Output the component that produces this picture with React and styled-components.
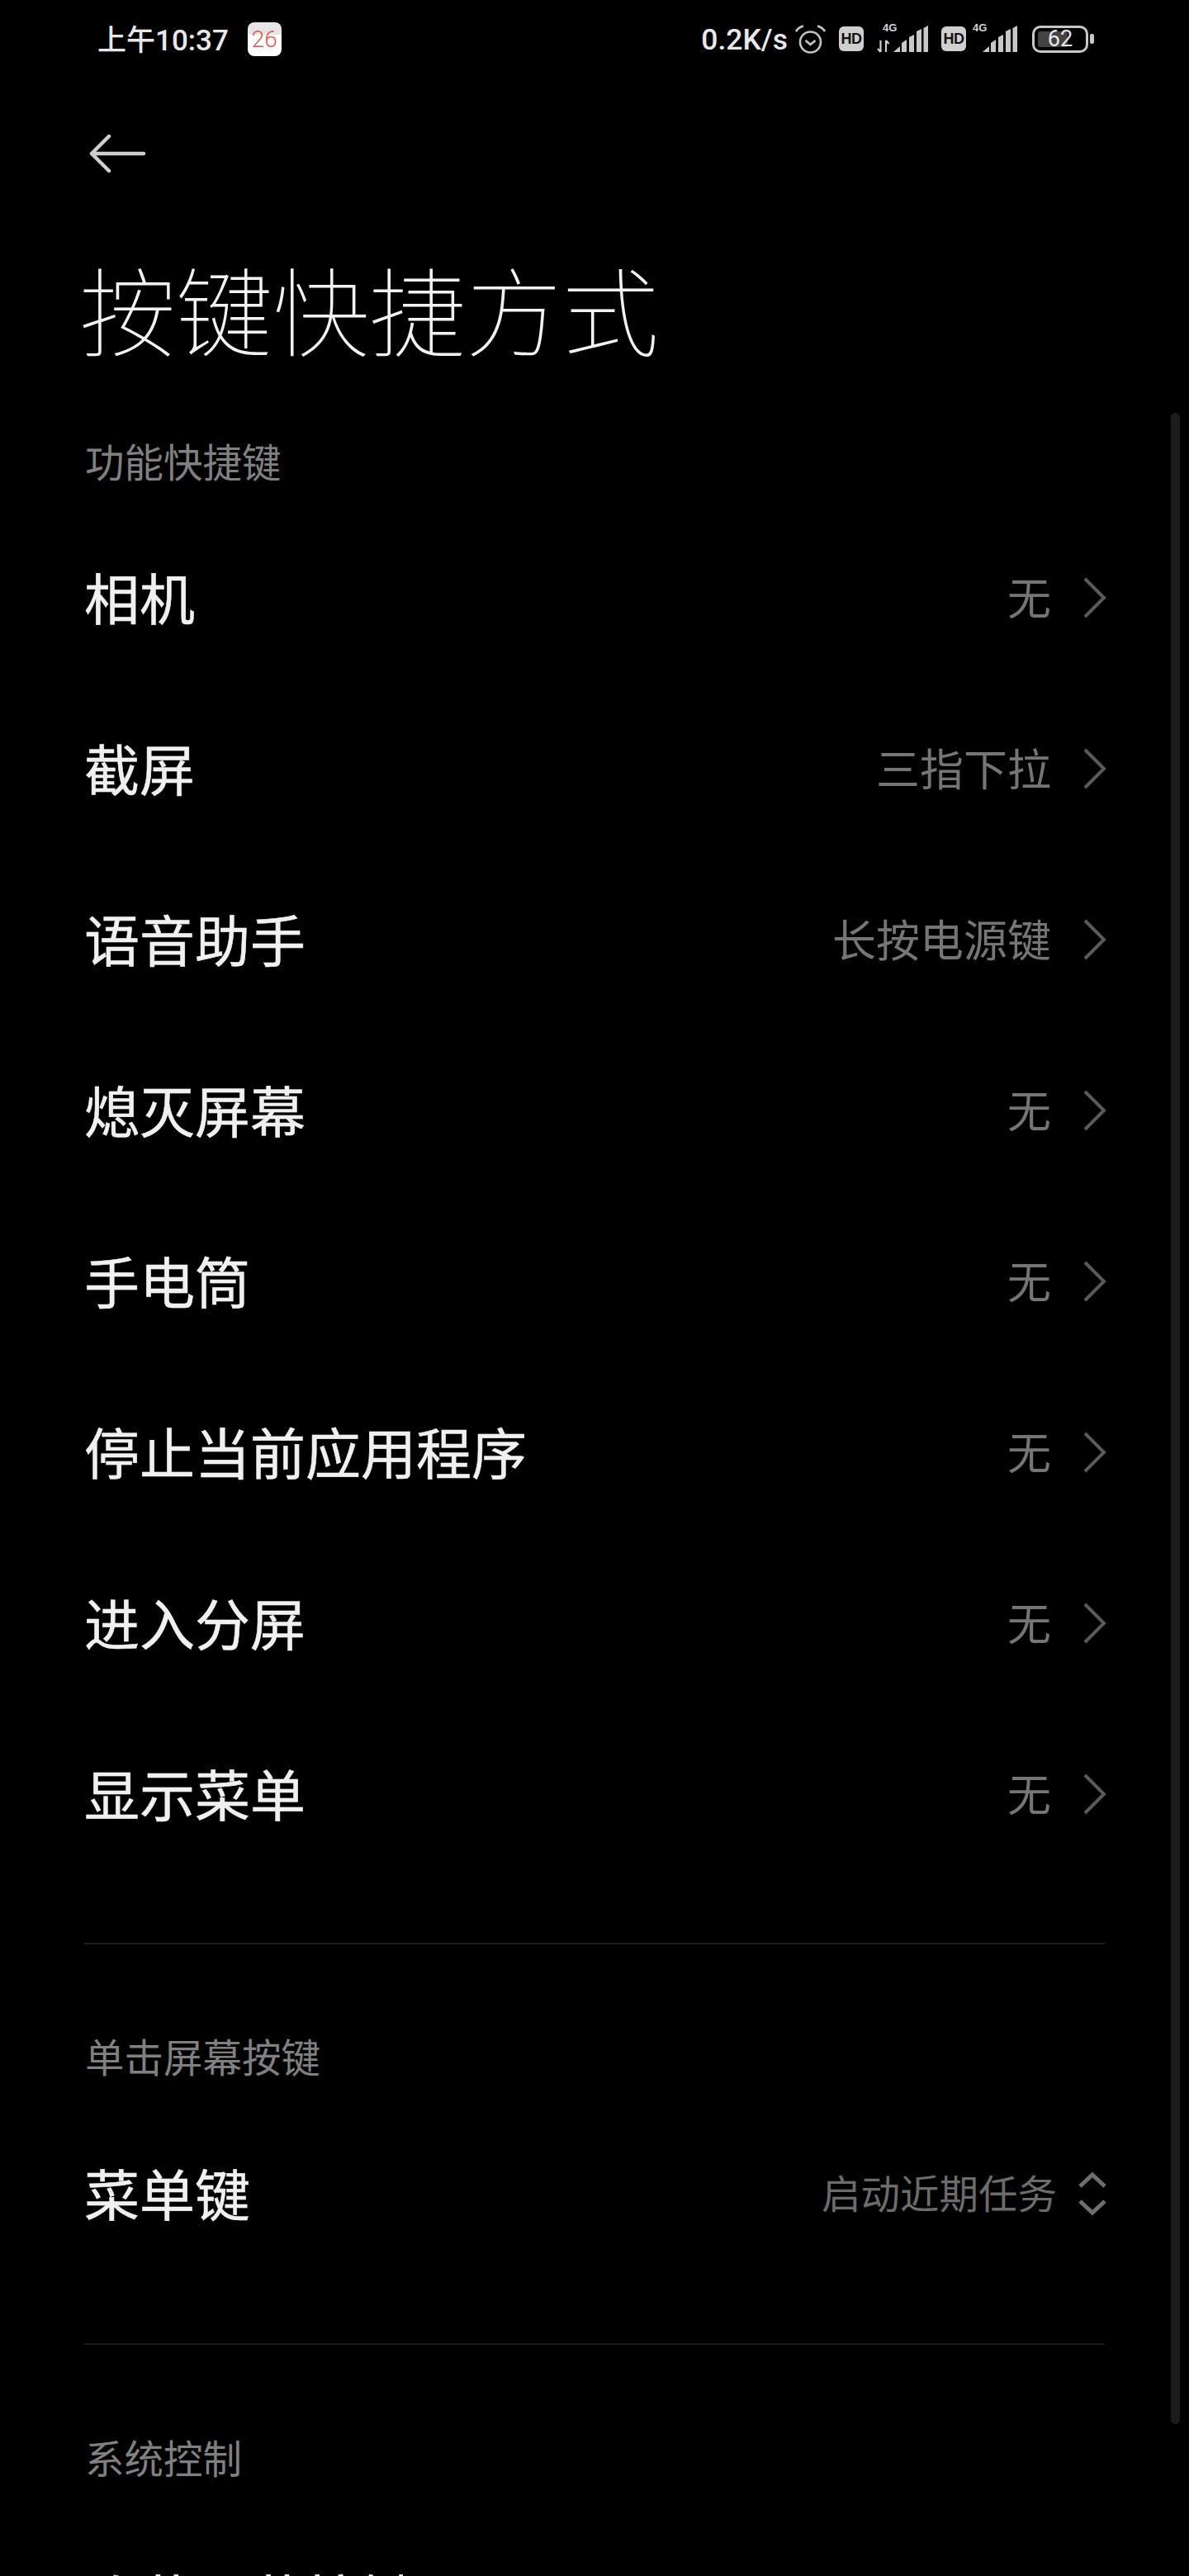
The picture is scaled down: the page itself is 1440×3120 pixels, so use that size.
import React from "react";
import styled, { createGlobalStyle } from "styled-components";

const Global = createGlobalStyle`
  html, body { margin: 0; padding: 0; background: #000; }
  body { font-family: "Noto Sans CJK SC", "Noto Sans", sans-serif; }
`;
const Page = styled.div`
  position: relative; width: 1440px; height: 3120px; overflow: hidden; background: #000; color: #fff;
`;
const StatusBar = styled.div`
  display: flex; align-items: center; justify-content: space-between;
  height: 94px; padding: 0 115px 0 118px;
`;
const StatusLeft = styled.div`display: flex; align-items: center; gap: 23px;`;
const StatusRight = styled.div`display: flex; align-items: center;`;
const Slot = styled.span`display: flex; align-items: center; margin-left: ${p => p.$ml || 0}px;`;
const Clock = styled.span`padding-top: 5px; font-size: 35px; line-height: 48px; font-weight: 500; color: #e8e8e8; font-family: "Roboto", "Noto Sans CJK SC", sans-serif;`;
const Speed = styled.span`padding-top: 2px; font-size: 35.5px; line-height: 48px; font-weight: 500; color: #e8e8e8; font-family: "Roboto", sans-serif;`;
const CalendarBadge = styled.span`
  width: 41px; height: 41px; border-radius: 8px; background: linear-gradient(#e6e6e8 0 36%, #fff 36%);
  color: #e5584a; font-size: 28px; line-height: 42px; text-align: center; font-family: "Roboto", sans-serif; font-weight: 300;
`;
const BackButton = styled.div`display: flex; padding: 69px 0 0 106px; height: 46px;`;
const Title = styled.h1`
  margin: 0; padding: 79px 0 0 96px; font-size: 117px; line-height: 168px; font-weight: 100; color: #f2f2f2;
`;
const SectionLabel = styled.div`
  padding: ${p => p.$top}px 0 ${p => p.$bottom}px 103px; font-size: 47.5px; line-height: 70px; color: #808080;
`;
const List = styled.div`display: flex; flex-direction: column;`;
const Row = styled.div`
  display: flex; align-items: center; justify-content: space-between;
  height: ${p => p.$h || 207}px; padding: 0 100px 0 102px;
`;
const RowLabel = styled.span`
  display: block; padding-bottom: 4px; font-size: 67px; line-height: 90px; font-weight: 400; color: #f0f0f0;
  -webkit-text-stroke: 0.5px #f0f0f0;
`;
const RowRight = styled.div`display: flex; align-items: center;`;
const Value = styled.span`display: block; padding-bottom: 4px; font-size: ${p => p.$size || 53}px; line-height: 70px; color: ${p => p.$color || "#757575"};`;
const Divider = styled.div`height: 2px; margin: ${p => p.$top}px 102px 0; background: #1c1c1c;`;
const Scrollbar = styled.div`
  position: absolute; left: 1418px; top: 500px; width: 11px; height: 2436px; border-radius: 6px; background: #1c1c1c;
`;

const Chevron = () => (
  <svg width="28" height="50" viewBox="0 0 28 50" style={{ marginLeft: 39 }}>
    <path d="M2 2 L25 25 L2 48" fill="none" stroke="#5a5a5a" strokeWidth="4" />
  </svg>
);
const Updown = () => (
  <svg width="34" height="54" viewBox="0 0 34 54" style={{ marginLeft: 26 }}>
    <path d="M2 18 L17 4 L32 18 M2 36 L17 50 L32 36" fill="none" stroke="#6e6e6e" strokeWidth="5" />
  </svg>
);
const Back = () => (
  <svg width="74" height="46" viewBox="0 0 74 46">
    <path d="M68 23 H5 M26 2 L5 23 L26 44" fill="none" stroke="#cfcfcf" strokeWidth="4.5" strokeLinecap="round" strokeLinejoin="round" />
  </svg>
);
const Alarm = () => (
  <svg width="37" height="35" viewBox="0 0 37 35">
    <circle cx="18.5" cy="21" r="12.5" fill="none" stroke="#c4c4c4" strokeWidth="2.6" />
    <path d="M12.5 19 L18.5 24 L24.5 19 M1 8 Q4 3 10 1.5 M36 8 Q33 3 27 1.5" fill="none" stroke="#c4c4c4" strokeWidth="2.8" />
  </svg>
);
const HdBadge = styled.span`
  width: 30px; height: 30px; border-radius: 6px; background: #cfcfcf; color: #111;
  font: 700 18px/30px "Liberation Sans", sans-serif; text-align: center; letter-spacing: -0.5px;
`;
const Bars = ({ x }) => (
  <g transform={`translate(${x} 0)`} fill="#c8c8c8">
    <path d="M0 36 L8 29 V36 Z" />
    <path d="M10 36 V25 L16 21 V36 Z" />
    <path d="M19 36 V18 L25 15 V36 Z" />
    <path d="M28 36 V11 L34 8 V36 Z" />
    <path d="M36.5 36 V7 L42 4 V36 Z" />
  </g>
);
const Signal = ({ arrows }) => (
  <svg width={arrows ? 62 : 54} height="40" viewBox={arrows ? "0 0 62 40" : "0 0 54 40"}>
    {arrows && <path d="M4.5 36 V22 M4.5 36 L1 32 M11 22 V36 M11 22 L14.5 26" stroke="#cfcfcf" strokeWidth="2.2" fill="none" />}
    <text x={arrows ? 7 : 0} y="11" fontSize="13" fontWeight="700" fill="#d5d5d5" fontFamily="Liberation Sans">4G</text>
    <Bars x={arrows ? 20 : 12} />
  </svg>
);
const BatteryWrap = styled.span`
  position: relative; display: flex; width: 68px; height: 33px; box-sizing: border-box;
  border: 3.5px solid #c8c8c8; border-radius: 10px;
`;
const BatteryFill = styled.span`position: absolute; left: 4px; top: 4px; bottom: 4px; width: 36px; background: #444; border-radius: 3px;`;
const BatteryText = styled.span`
  position: relative; width: 100%; text-align: center; font: 400 27px/26px "Roboto", sans-serif; color: #e8e8e8;
`;
const BatteryCap = styled.span`width: 5px; height: 12px; border-radius: 2px; background: #c8c8c8; margin-left: 2px;`;

const rows = [
  ["相机", "无"], ["截屏", "三指下拉"], ["语音助手", "长按电源键"], ["熄灭屏幕", "无"],
  ["手电筒", "无"], ["停止当前应用程序", "无"], ["进入分屏", "无"], ["显示菜单", "无"],
];

export default function App() {
  return (
    <Page>
      <Global />
      <StatusBar>
        <StatusLeft>
          <Clock>上午10:37</Clock>
          <CalendarBadge>26</CalendarBadge>
        </StatusLeft>
        <StatusRight>
          <Speed>0.2K/s</Speed>
          <Slot $ml={9}><Alarm /></Slot>
          <Slot $ml={16}><HdBadge>HD</HdBadge></Slot>
          <Slot $ml={16}><Signal arrows /></Slot>
          <Slot $ml={16}><HdBadge>HD</HdBadge></Slot>
          <Slot $ml={8}><Signal /></Slot>
          <Slot $ml={18}><BatteryWrap><BatteryFill /><BatteryText>62</BatteryText></BatteryWrap></Slot>
          <BatteryCap />
        </StatusRight>
      </StatusBar>
      <BackButton><Back /></BackButton>
      <Title>按键快捷方式</Title>
      <SectionLabel $top={67} $bottom={27}>功能快捷键</SectionLabel>
      <List>
        {rows.map(([a, b]) => (
          <Row key={a}><RowLabel>{a}</RowLabel><RowRight><Value>{b}</Value><Chevron /></RowRight></Row>
        ))}
      </List>
      <Divider $top={77} />
      <SectionLabel $top={100} $bottom={28}>单击屏幕按键</SectionLabel>
      <Row $h={208}><RowLabel>菜单键</RowLabel><RowRight><Value $size={47.5} $color="#6c6c6c">启动近期任务</Value><Updown /></RowRight></Row>
      <Divider $top={77} />
      <SectionLabel $top={101} $bottom={33}>系统控制</SectionLabel>
      <Row $h={208}><RowLabel>隐藏屏幕按键</RowLabel></Row>
      <Scrollbar />
    </Page>
  );
}
